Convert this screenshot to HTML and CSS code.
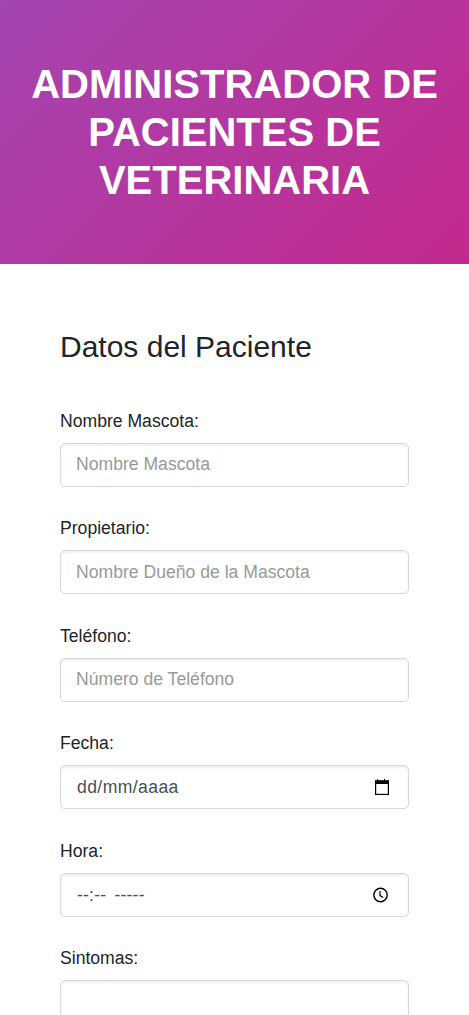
FILE: index.html
```html
<!DOCTYPE html>
<html lang="es">
<head>
    <meta charset="UTF-8">
    <meta name="viewport" content="width=device-width, initial-scale=1.0">
    <title>Administrador de Pacientes</title>
    <link rel="stylesheet" href="styles.css">
</head>
<body>
    <header class="page-header">
        <h1>Administrador de Pacientes de Veterinaria</h1>
    </header>

    <main class="content">
        <h2>Datos del Paciente</h2>
        <form class="patient-form">
            <div class="form-group">
                <label for="mascota">Nombre Mascota:</label>
                <input id="mascota" class="form-control" type="text" placeholder="Nombre Mascota">
            </div>
            <div class="form-group">
                <label for="propietario">Propietario:</label>
                <input id="propietario" class="form-control" type="text" placeholder="Nombre Dueño de la Mascota">
            </div>
            <div class="form-group">
                <label for="telefono">Teléfono:</label>
                <input id="telefono" class="form-control" type="text" placeholder="Número de Teléfono">
            </div>
            <div class="form-group">
                <label>Fecha:</label>
                <div class="form-control picker">
                    <span class="picker-date">dd/mm/aaaa</span>
                    <svg class="picker-icon" viewBox="0 0 16 16" width="16" height="16">
                        <path fill="#000" d="M4 0h1v1.500h6V0h1v1.500h4V5H2V1.500h2z"/>
                        <rect x="2.600" y="2" width="12.800" height="13.400" fill="none" stroke="#000" stroke-width="1.200"/>
                    </svg>
                </div>
            </div>
            <div class="form-group">
                <label>Hora:</label>
                <div class="form-control picker">
                    <span class="picker-time">--:-- -----</span>
                    <svg class="picker-icon" viewBox="0 0 16 16" width="16" height="16">
                        <circle cx="7.500" cy="8" r="6.700" fill="none" stroke="#000" stroke-width="1.400"/>
                        <path fill="none" stroke="#000" stroke-width="1.200" d="M7 4v4.600l3.200 1.900"/>
                    </svg>
                </div>
            </div>
            <div class="form-group">
                <label for="sintomas">Sintomas:</label>
                <textarea id="sintomas" class="form-control textarea"></textarea>
            </div>
        </form>
    </main>
</body>
</html>
```

FILE: styles.css
```css
* {
    margin: 0;
    padding: 0;
    box-sizing: border-box;
}

html, body {
    height: 1015px;
    overflow: hidden;
}

body {
    background: #fff;
    color: #212529;
    font-family: "Liberation Sans", Arial, sans-serif;
    font-size: 17.6px;
    line-height: 1.5;
}

.page-header {
    height: 264px;
    display: flex;
    align-items: center;
    justify-content: center;
    padding: 0 15px;
    background: linear-gradient(135deg, #a445b2, #c3298c);
}

h1 {
    color: #fff;
    font-size: 40px;
    font-weight: 700;
    line-height: 1.2;
    text-align: center;
    text-transform: uppercase;
}

.content {
    padding: 65px 60px 0;
}

h2 {
    font-size: 30px;
    font-weight: 400;
    line-height: 1.2;
    margin-bottom: 42.6px;
}

.form-group {
    margin-bottom: 28.1px;
}

label {
    display: block;
    margin-bottom: 9px;
}

.form-control {
    display: block;
    width: 100%;
    height: 44px;
    padding: 6px 15px;
    background: #fff;
    border: 1px solid #d3d8dd;
    border-radius: 5px;
    box-shadow: inset 0 2px 2px rgba(0, 0, 0, 0.06);
    color: #495057;
    font-family: inherit;
    font-size: 17.6px;
    line-height: 1.5;
    outline: none;
}

.form-control::placeholder {
    color: #999;
    opacity: 1;
}

.picker {
    display: flex;
    align-items: center;
    justify-content: space-between;
    padding: 0 19px 0 16px;
}

.picker-date {
    letter-spacing: 0.4px;
}

.picker-time {
    letter-spacing: 0.2px;
    word-spacing: 3px;
}

.picker-icon {
    flex: none;
}

.textarea {
    height: 120px;
    resize: none;
}
```
